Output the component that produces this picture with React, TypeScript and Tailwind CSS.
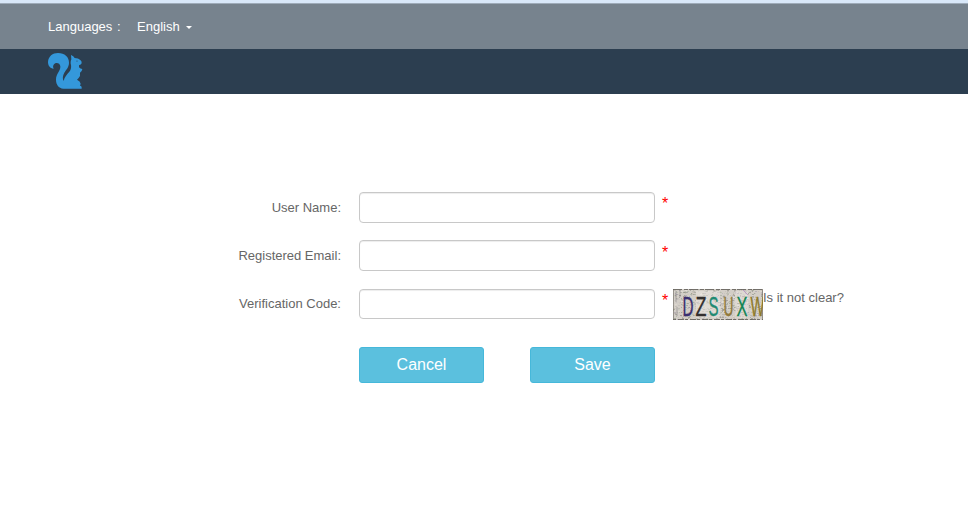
import React from "react";

const noiseColors = ["#8d9184", "#b9b4ae", "#8b8780", "#d8d3c9", "#a39bab", "#9fae96", "#ebe7df", "#c4b8a6"];

function makeNoise() {
  let seed = 7351;
  const next = () => {
    seed = (seed * 16807) % 2147483647;
    return seed / 2147483647;
  };
  return Array.from({ length: 1000 }, () => ({
    x: Math.floor(next() * 90),
    y: Math.floor(next() * 31),
    w: 1 + Math.floor(next() * 2),
    fill: noiseColors[Math.floor(next() * noiseColors.length)],
    opacity: 0.2 + next() * 0.5,
  }));
}

const noise = makeNoise();

const letters = [
  { char: "D", x: 9.5, width: 11, fill: "#3a2f70" },
  { char: "Z", x: 22.5, width: 11, fill: "#34302f" },
  { char: "S", x: 35.5, width: 10, fill: "#1f8a72" },
  { char: "U", x: 50.5, width: 10, fill: "#91793a" },
  { char: "X", x: 63.5, width: 11, fill: "#128554" },
  { char: "W", x: 77.5, width: 14, fill: "#8f7b2c" },
];

function CodeImage() {
  return (
    <svg className="ml-[4px] block shrink-0" width="90" height="31" viewBox="0 0 90 31">
      <rect width="90" height="31" fill="#d3cec7" />
      {noise.map((n, i) => (
        <rect key={i} x={n.x} y={n.y} width={n.w} height="1" fill={n.fill} opacity={n.opacity} />
      ))}
      <rect x="23" y="2" width="24" height="27" fill="#f0ece7" opacity=".45" />
      <rect x="62" y="2" width="13" height="27" fill="#f0ece7" opacity=".35" />
      <path d="M0 .5H90" stroke="#5c5954" strokeDasharray="9 2 4 1" opacity=".8" />
      <path d="M0 30.5H90" stroke="#5c5954" strokeDasharray="3 2 6 1" opacity=".8" />
      <path d="M.5 0V31M89.5 0V31" stroke="#6c6962" opacity=".6" />
      <path d="M3 2v11M7 1v6M4 18v9" stroke="#77747a" opacity=".5" />
      <path d="M70 1l5 5" stroke="#b48cc4" opacity=".8" />
      {letters.map((l) => (
        <text
          key={l.char}
          x={l.x}
          y="27"
          fill={l.fill}
          stroke={l.fill}
          strokeWidth=".35"
          fontFamily="'Liberation Sans', Arial, sans-serif"
          fontSize="28"
          textLength={l.width}
          lengthAdjust="spacingAndGlyphs"
        >
          {l.char}
        </text>
      ))}
    </svg>
  );
}

function Squirrel() {
  return (
    <svg className="block" width="35" height="36" viewBox="0 0 105 108" fill="#3498db">
      <path d="M17 47C6 46 0 38 0 27C1 10 14 0 30 0C50 0 63 12 63 29C63 43 54 50 49 59C44 68 43 77 47 84C49 72 57 64 64 56C69 50 70 44 69 36C67 30 68 24 70 19L69 6Q77 9 80 15Q91 15 97 21Q102 25 101 31Q99 35 93 37L93 43Q97 48 103 48Q102 56 96 59Q98 68 92 75L87 80Q97 84 98 92L96 98Q102 98 101 107H46C32 105 24 95 24 80C24 63 38 54 37 40C36 30 24 27 18 34C14 39 15 43 17 47Z" />
      <circle cx="87" cy="24" r="1.6" fill="#2c3e50" />
    </svg>
  );
}

interface FieldProps {
  label: string;
  labelPadding: string;
  markPadding: string;
  height: string;
  children?: React.ReactNode;
}

function Field({ label, labelPadding, markPadding, height, children }: FieldProps) {
  return (
    <div className="flex h-[31px] items-start">
      <label className={`w-[341px] text-right leading-5 ${labelPadding}`}>{label}</label>
      <input
        aria-label={label}
        className={`ml-[18px] w-[296px] shrink-0 rounded-[4px] border border-[#c8c8c8] bg-white px-3 shadow-[inset_0_1px_1px_rgba(0,0,0,0.075)] outline-none ${height}`}
      />
      <span className={`ml-[7px] w-[7px] text-[16px] leading-5 text-[#ff0000] ${markPadding}`}>*</span>
      {children}
    </div>
  );
}

const buttonClass =
  "h-9 w-[125px] rounded-[3px] border border-[#46b8da] bg-[#5bc0de] pb-px text-[16px] text-white";

export default function App() {
  return (
    <div className="h-[517px] overflow-hidden bg-white font-['Liberation_Sans',Arial,sans-serif] text-[13px] text-[#666666]">
      <div className="h-[3px] bg-[#d9e8f9]" />
      <div className="flex h-[46px] items-center border-t border-[#9eabb9] bg-[#77838e] pl-12 text-white">
        <span className="w-[89px] whitespace-pre [word-spacing:1px]">Languages :</span>
        <span>English</span>
        <span className="mt-[2px] ml-[6px] border-x-[3px] border-t-[3px] border-x-transparent border-t-white" />
      </div>
      <header className="h-[45px] bg-[#2c3e50] pt-1 pl-12">
        <Squirrel />
      </header>
      <form className="pt-[98px]" onSubmit={(e) => e.preventDefault()}>
        <div className="flex flex-col gap-[17px]">
          <Field label="User Name:" labelPadding="pt-[6px]" markPadding="pt-[2px]" height="h-[31px]" />
          <Field label="Registered Email:" labelPadding="pt-[6px]" markPadding="pt-[3px]" height="h-[31px]" />
          <div className="pt-px">
            <Field label="Verification Code:" labelPadding="pt-[5px]" markPadding="pt-[2px]" height="h-[30px]">
              <CodeImage />
              <a className="leading-[18px]">Is it not clear?</a>
            </Field>
          </div>
        </div>
        <div className="mt-[27px] flex gap-[46px] pl-[359px]">
          <button type="button" className={buttonClass}>Cancel</button>
          <button type="submit" className={buttonClass}>Save</button>
        </div>
      </form>
    </div>
  );
}
